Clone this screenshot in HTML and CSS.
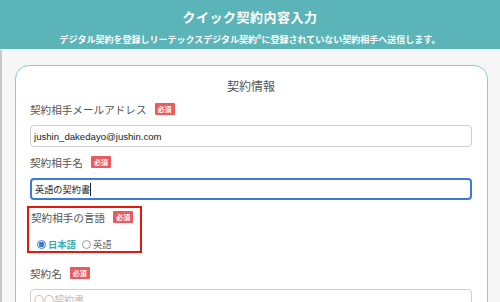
FILE: index.html
```html
<!DOCTYPE html>
<html lang="ja">
<head>
    <meta charset="UTF-8">
    <meta name="viewport" content="width=device-width, initial-scale=1.0">
    <title>クイック契約内容入力</title>
    <link rel="stylesheet" href="styles.css">
</head>
<body>
    <header class="header">
        <h1 class="header-title">クイック契約内容入力</h1>
        <p class="header-sub">デジタル契約を登録しリーテックスデジタル契約®に登録されていない契約相手へ送信します。</p>
    </header>

    <main class="main">
        <section class="card">
            <h2 class="card-title">契約情報</h2>

            <div class="field">
                <label class="label">契約相手メールアドレス<span class="badge">必須</span></label>
                <input class="input" type="text" value="jushin_dakedayo@jushin.com">
            </div>

            <div class="field">
                <label class="label">契約相手名<span class="badge">必須</span></label>
                <div class="input input-focus">英語の契約書<span class="caret"></span></div>
            </div>

            <div class="field field-lang">
                <label class="label">契約相手の言語<span class="badge">必須</span></label>
                <div class="radios">
                    <span class="radio checked"></span><span class="radio-text active">日本語</span>
                    <span class="radio"></span><span class="radio-text">英語</span>
                </div>
            </div>

            <div class="field">
                <label class="label">契約名<span class="badge">必須</span></label>
                <input class="input" type="text" placeholder="〇〇契約書">
            </div>
        </section>
    </main>
</body>
</html>
```

FILE: styles.css
```css
html, body {
    height: 302px;
    overflow: hidden;
}

body {
    margin: 0;
    font-family: "Noto Sans CJK JP", "Noto Sans", sans-serif;
    background-color: #f6f6f6;
}

.header {
    height: 50px;
    background-color: #5bb4b7;
    border-bottom: 1px solid #ffffff;
    color: #ffffff;
    text-align: center;
    box-sizing: border-box;
    padding-top: 7px;
}

.header-title {
    margin: 0;
    font-size: 13px;
    line-height: 20px;
    font-weight: bold;
    letter-spacing: 0.5px;
}

.header-sub {
    margin: 7px 0 0;
    font-size: 9px;
    line-height: 12px;
    font-weight: bold;
}

.main {
    border-left: 2px solid #c9c9c9;
    padding: 15px 12px 0 13px;
    height: 237px;
    overflow: hidden;
}

.card {
    background-color: #ffffff;
    border: 1px solid #86cfd0;
    border-radius: 14px;
    padding: 11px 15px 10px 14px;
}

.card-title {
    margin: 0 0 5px;
    font-size: 12px;
    line-height: 18px;
    font-weight: normal;
    color: #555555;
    text-align: center;
}

/* form fields */
.field {
    margin-bottom: 6px;
}

.label {
    display: flex;
    align-items: center;
    height: 18px;
    margin-bottom: 7px;
    font-size: 10.6px;
    color: #555555;
}

.badge {
    display: inline-block;
    margin-left: 8px;
    background-color: #ec5a5e;
    color: #ffffff;
    font-size: 7px;
    font-weight: bold;
    line-height: 12px;
    padding: 0 3px;
    border-radius: 1px;
}

.input {
    display: block;
    width: 100%;
    height: 22px;
    box-sizing: border-box;
    border: 1px solid #d0d0d0;
    border-radius: 4px;
    padding: 0 3px;
    font-family: "Liberation Sans", "Noto Sans CJK JP", sans-serif;
    font-size: 9.6px;
    color: #222222;
    outline: none;
    background: #ffffff;
}

.input::placeholder {
    color: #bbbbbb;
    font-size: 10px;
}

.input-focus {
    border: 2px solid #3b7bd8;
    padding: 0 3px;
    display: flex;
    align-items: center;
    font-family: "Noto Sans CJK JP", sans-serif;
    font-size: 9.2px;
}

.caret {
    display: inline-block;
    width: 1px;
    height: 13px;
    background-color: #222222;
}

/* language field highlighted */
.field-lang {
    width: fit-content;
    margin: 4px 0 11px -3px;
    border: 2px solid #e5170f;
    padding: 0 7px 0 2px;
}

.field-lang .label {
    margin-bottom: 11px;
}

.radios {
    display: flex;
    align-items: center;
    height: 14px;
    padding-left: 6px;
    font-size: 9.3px;
}

.radio {
    width: 7px;
    height: 7px;
    border: 1px solid #999999;
    border-radius: 50%;
    margin-right: 2px;
}

.radio.checked {
    border-color: #3b7bd8;
    background: radial-gradient(circle, #3b7bd8 55%, #ffffff 60%);
}

.radio-text {
    color: #666666;
    margin-right: 6px;
}

.radio-text.active {
    color: #3aa9ad;
    font-weight: bold;
}
```
